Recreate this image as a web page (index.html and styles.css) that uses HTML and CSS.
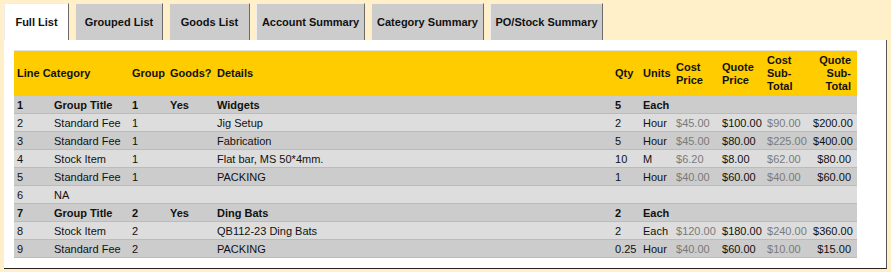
FILE: index.html
```html
<!DOCTYPE html>
<html>
<head>
    <meta charset="UTF-8">
    <title>Quote Lines</title>
    <link rel="stylesheet" href="styles.css">
</head>
<body>
    <div class="tabs">
        <div class="tab active tab-full">Full List</div>
        <div class="tab tab-grouped">Grouped List</div>
        <div class="tab tab-goods">Goods List</div>
        <div class="tab tab-account">Account Summary</div>
        <div class="tab tab-category">Category Summary</div>
        <div class="tab tab-stock">PO/Stock Summary</div>
    </div>

    <div class="panel">
        <!-- Lista completa de lineas -->
        <table class="lines">
            <colgroup>
                <col class="c-line">
                <col class="c-cat">
                <col class="c-group">
                <col class="c-goods">
                <col class="c-details">
                <col class="c-qty">
                <col class="c-units">
                <col class="c-cprice">
                <col class="c-qprice">
                <col class="c-csub">
                <col class="c-qsub">
            </colgroup>
            <thead>
                <tr>
                    <th colspan="2">Line Category</th>
                    <th>Group</th>
                    <th>Goods?</th>
                    <th>Details</th>
                    <th>Qty</th>
                    <th>Units</th>
                    <th>Cost Price</th>
                    <th>Quote Price</th>
                    <th>Cost Sub-Total</th>
                    <th class="num">Quote Sub-Total</th>
                </tr>
            </thead>
            <tbody>
                <tr class="title">
                    <td>1</td><td>Group Title</td><td>1</td><td>Yes</td><td>Widgets</td>
                    <td>5</td><td>Each</td><td></td><td></td><td></td><td></td>
                </tr>
                <tr>
                    <td>2</td><td>Standard Fee</td><td>1</td><td></td><td>Jig Setup</td>
                    <td>2</td><td>Hour</td><td class="cost">$45.00</td><td>$100.00</td><td class="cost">$90.00</td><td class="num">$200.00</td>
                </tr>
                <tr>
                    <td>3</td><td>Standard Fee</td><td>1</td><td></td><td>Fabrication</td>
                    <td>5</td><td>Hour</td><td class="cost">$45.00</td><td>$80.00</td><td class="cost">$225.00</td><td class="num">$400.00</td>
                </tr>
                <tr>
                    <td>4</td><td>Stock Item</td><td>1</td><td></td><td>Flat bar, MS 50*4mm.</td>
                    <td>10</td><td>M</td><td class="cost">$6.20</td><td>$8.00</td><td class="cost">$62.00</td><td class="num">$80.00</td>
                </tr>
                <tr>
                    <td>5</td><td>Standard Fee</td><td>1</td><td></td><td>PACKING</td>
                    <td>1</td><td>Hour</td><td class="cost">$40.00</td><td>$60.00</td><td class="cost">$40.00</td><td class="num">$60.00</td>
                </tr>
                <tr>
                    <td>6</td><td>NA</td><td></td><td></td><td></td>
                    <td></td><td></td><td></td><td></td><td></td><td></td>
                </tr>
                <tr class="title">
                    <td>7</td><td>Group Title</td><td>2</td><td>Yes</td><td>Ding Bats</td>
                    <td>2</td><td>Each</td><td></td><td></td><td></td><td></td>
                </tr>
                <tr>
                    <td>8</td><td>Stock Item</td><td>2</td><td></td><td>QB112-23 Ding Bats</td>
                    <td>2</td><td>Each</td><td class="cost">$120.00</td><td>$180.00</td><td class="cost">$240.00</td><td class="num">$360.00</td>
                </tr>
                <tr>
                    <td>9</td><td>Standard Fee</td><td>2</td><td></td><td>PACKING</td>
                    <td>0.25</td><td>Hour</td><td class="cost">$40.00</td><td>$60.00</td><td class="cost">$10.00</td><td class="num">$15.00</td>
                </tr>
            </tbody>
        </table>
    </div>
</body>
</html>
```

FILE: styles.css
```css
/* Pestañas y tabla de lineas */
body {
    font-family: "Liberation Sans", Arial, sans-serif;
    font-size: 11px;
    background-color: #fff0c9;
    margin: 0;
    padding: 3px 4px 0 4px;
    color: #111;
}

.tabs {
    display: flex;
    gap: 6px;
    height: 37px;
}

.tab {
    box-sizing: border-box;
    display: flex;
    align-items: center;
    justify-content: center;
    white-space: nowrap;
    font-weight: bold;
    background-color: #cccccc;
    border-top: 1px solid #eeeeee;
    border-left: 1px solid #eeeeee;
    border-right: 1px solid #6b6b6b;
}

.tab.active {
    background-color: #fff;
}

.tab-full { width: 65px; }
.tab-grouped { width: 88px; }
.tab-goods { width: 81px; }
.tab-account { width: 109px; }
.tab-category { width: 113px; }
.tab-stock { width: 113px; }

.panel {
    background-color: #fff;
    border-right: 1px solid #555;
    border-bottom: 1px solid #222;
    padding: 10px;
}

.lines {
    width: 843px;
    table-layout: fixed;
    border-collapse: collapse;
    border-top: 1px solid #e2e2e2;
}

.c-line { width: 37px; }
.c-cat { width: 78px; }
.c-group { width: 38px; }
.c-goods { width: 47px; }
.c-details { width: 398px; }
.c-qty { width: 28px; }
.c-units { width: 33px; }
.c-cprice { width: 46px; }
.c-qprice { width: 45px; }
.c-csub { width: 46px; }
.c-qsub { width: 47px; }

.lines th {
    background-color: #ffcc00;
    height: 45px;
    padding: 0 3px;
    line-height: 13px;
    text-align: left;
    vertical-align: middle;
}

.lines td {
    height: 17px;
    padding: 0 3px;
    white-space: nowrap;
    border-bottom: 1px solid #bbbbbb;
    vertical-align: middle;
}

.lines tbody tr:nth-child(odd) td {
    background-color: #cccccc;
}

.lines tbody tr:nth-child(even) td {
    background-color: #dddddd;
}

.lines tr.title td {
    font-weight: bold;
}

.lines .num {
    text-align: right;
    padding-right: 6px;
}

.lines td.cost {
    color: #7a7a7a;
}
```
